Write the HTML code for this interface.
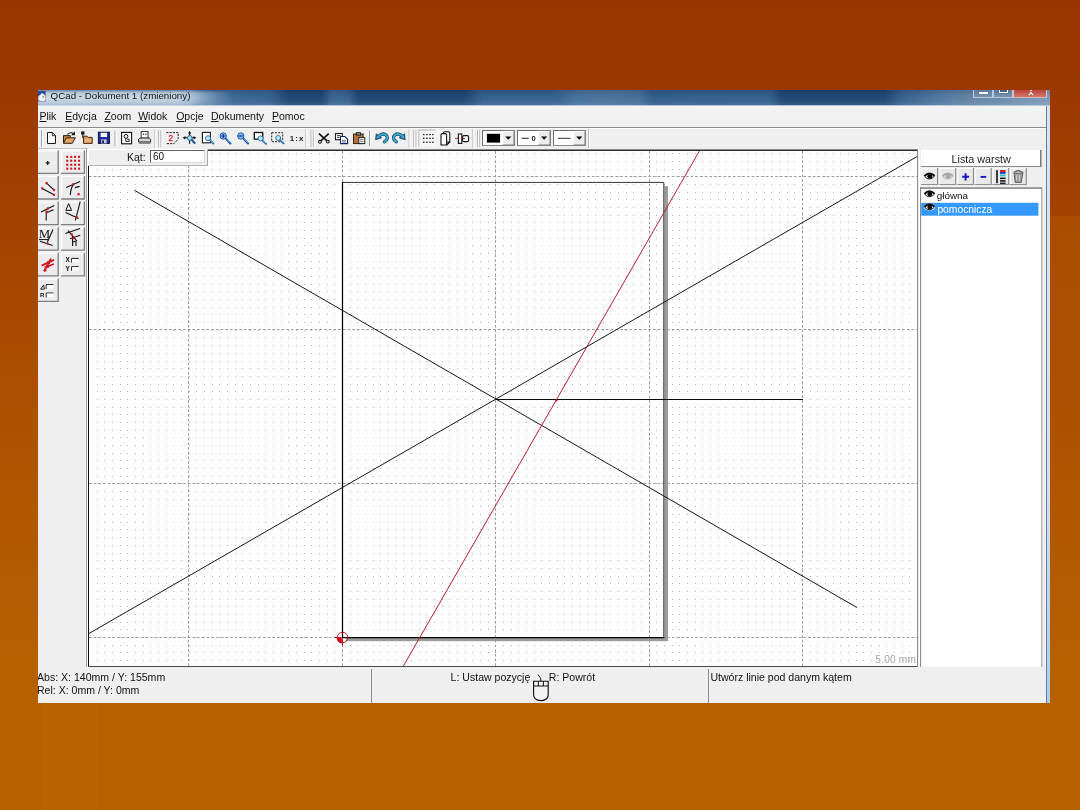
<!DOCTYPE html>
<html lang="pl">
<head>
<meta charset="utf-8">
<title>QCad - Dokument 1 (zmieniony)</title>
<style>
html,body{margin:0;padding:0;}
body{width:1080px;height:810px;overflow:hidden;position:relative;
  font-family:"Liberation Sans",sans-serif;color:#111;
  background:linear-gradient(180deg,#993300 0px,#9b3700 90px,#a24200 216px,#a74900 310px,#ac5000 400px,#b15800 520px,#b66000 660px,#b66000 810px);}
.abs{position:absolute;}
#win{position:absolute;left:38px;top:90px;width:1012px;height:613px;background:#efefef;overflow:hidden;will-change:transform;-webkit-font-smoothing:antialiased;}
/* ---------- title bar ---------- */
#title{position:absolute;left:0;top:0;width:1012px;height:16px;
  background:
   linear-gradient(180deg,rgba(0,0,0,.12) 0,rgba(0,0,0,0) 6px,rgba(255,255,255,.04) 11px,rgba(255,255,255,.10) 14.8px,rgba(176,198,220,.95) 15px,rgba(196,212,230,.95) 16px),
   linear-gradient(90deg,#7a9bbb 0,#6a8fb3 152px,#4a78a3 164px,#3d6a97 180px,#35618e 232px,#1f4773 250px,#1f4773 284px,#3a6591 294px,#38638f 310px,#1f4773 320px,#1f4773 427px,#34608d 444px,#34608d 517px,#44709a 537px,#4a739c 562px,#456e98 602px,#2f5c89 614px,#335f8b 652px,#34608c 732px,#1f4773 744px,#1f4773 847px,#35618d 864px,#4f789f 902px,#6485a6 937px,#7b99b7 1012px);}
#title .glow{position:absolute;left:0;top:0;width:200px;height:16px;
  background:linear-gradient(180deg,rgba(255,255,255,.0) 0,rgba(255,255,255,.55) 3px,rgba(255,255,255,.62) 8px,rgba(255,255,255,.45) 13px,rgba(255,255,255,.2) 16px);
  -webkit-mask-image:linear-gradient(90deg,#000 0,#000 140px,rgba(0,0,0,.55) 165px,rgba(0,0,0,0) 195px);mask-image:linear-gradient(90deg,#000 0,#000 140px,rgba(0,0,0,.55) 165px,rgba(0,0,0,0) 195px);}
#title .txt{position:absolute;left:12.6px;top:-1.2px;font-size:9.75px;line-height:14px;color:#14181e;white-space:nowrap;}
.cap{position:absolute;top:-6px;height:13.5px;border:1px solid rgba(215,226,238,.75);border-top:none;box-sizing:border-box;background:linear-gradient(180deg,#5a7694 0,#64819f 60%,#7893ae 100%);}
.cap.red{background:linear-gradient(180deg,#b8403c 0,#be4a44 55%,#d67a68 100%);}
.cap i{position:absolute;display:block;}
/* ---------- menu ---------- */
#menu{position:absolute;left:0;top:16px;width:1009px;height:21px;background:linear-gradient(180deg,#f5f5f5 0,#f1f1f1 30%,#efefef 100%);border-bottom:1px solid #8a8a8a;}
#menu span{position:absolute;top:3px;font-size:10.5px;line-height:14px;white-space:nowrap;color:#101010;}
#menu u{text-decoration:underline;text-underline-offset:1px;}
/* ---------- toolbar ---------- */
#tb{position:absolute;left:0;top:38px;width:1009px;height:21px;background:#efefef;}
.hd{position:absolute;top:3px;width:1px;height:16px;background:#a5a5a5;box-shadow:1px 0 0 #fff;}
.sep{position:absolute;top:3px;width:1px;height:16px;background:#9c9c9c;box-shadow:1px 0 0 #fff;}
.ic{position:absolute;top:3px;width:15px;height:15px;}
.combo{position:absolute;top:2px;height:15px;background:#fff;border:1px solid #7d7d7d;border-right-color:#d8d8d8;border-bottom-color:#d8d8d8;box-sizing:border-box;}
.combo .ar{position:absolute;right:0;top:0;width:12px;height:13px;background:#ececec;box-shadow:inset 1px 1px 0 #fff,inset -1px -1px 0 #777;}
.combo .ar:after{content:"";position:absolute;left:3px;top:5px;border:3px solid transparent;border-top:3px solid #000;border-bottom:none;}
/* ---------- left tools ---------- */
#tools{position:absolute;left:0;top:59px;width:50px;height:519px;background:#efefef;}
.tbtn{position:absolute;width:23px;height:23px;background:#ececec;box-sizing:border-box;border:1px solid;border-color:#fdfdfd #7c7c7c #7c7c7c #fdfdfd;box-shadow:1px 1px 0 #b8b8b8;}
.tbtn svg{position:absolute;left:0;top:0;}
/* ---------- canvas ---------- */
#cv{position:absolute;left:50px;top:59px;width:830px;height:518px;background:#fff;}
#opt{position:absolute;left:50px;top:59px;width:120px;height:17px;background:#efefef;box-sizing:border-box;border:1px solid;border-color:#fff #a8a8a8 #b4b4b4 #fff;}
#opt .lb{position:absolute;left:38px;top:1px;font-size:10.5px;line-height:13px;}
#opt .in{position:absolute;left:61px;top:0px;width:55px;height:13px;background:#fff;box-sizing:border-box;border:1px solid;border-color:#5e5e5e #d8d8d8 #d8d8d8 #5e5e5e;}
#opt .in span{position:absolute;left:2px;top:0px;font-size:10px;line-height:11px;}
/* ---------- layers ---------- */
#lay{position:absolute;left:881px;top:59px;width:127px;height:519px;background:#efefef;}
#lay .hdr{position:absolute;left:1px;top:1px;width:120px;height:16px;background:#fff;border-right:2px solid #8b8b8b;border-bottom:1px solid #8b8b8b;box-sizing:border-box;text-align:center;font-size:10px;line-height:15px;color:#222;}
.lbtn{position:absolute;top:19px;width:17px;height:17px;background:#e9e9e9;box-sizing:border-box;border:1px solid;border-color:#fbfbfb #8a8a8a #8a8a8a #fbfbfb;}
#lay .list{position:absolute;left:1px;top:38px;width:121px;height:481px;background:#fff;box-sizing:border-box;border:1px solid;border-color:#6f6f6f #bdbdbd #bdbdbd #8a8a8a;}
.row{position:absolute;left:0px;width:118px;height:13px;font-size:9.8px;line-height:13px;white-space:nowrap;}
.row span{position:absolute;left:15px;top:0;}
.row svg{position:absolute;left:2px;top:1px;}
/* ---------- status ---------- */
#st{position:absolute;left:0;top:577px;width:1009px;height:36px;background:#efefef;}
#st .t{position:absolute;font-size:10.55px;line-height:13px;white-space:nowrap;color:#111;}
#st .vs{position:absolute;top:2px;width:1px;height:34px;background:#8d8d8d;}
/* window right border */
#rb{position:absolute;left:1008px;top:16px;width:4px;height:597px;background:linear-gradient(90deg,#717e89 0,#717e89 1px,rgba(0,0,0,0) 1px),linear-gradient(180deg,#d3e3f9 0,#cfe1fa 380px,#b2d3f7 520px,#a8cff7 597px);}
</style>
</head>
<body>
<div id="win">
<div id="title"><div class="glow"></div>
  <svg width="10" height="12" viewBox="0 0 10 12" style="position:absolute;left:0;top:1px"><rect x="0" y="0" width="7.6" height="10.4" fill="#2c4a96"/><path d="M.2 8.6Q0 4.4 2.6 3.8Q3.4 1.2 5.2 3Q7.6 3.6 7.2 6.4Q8.6 8.4 6.6 10H1.6Z" fill="#f1f1f1" stroke="#c4c9d6" stroke-width=".5"/><rect x="4.6" y="5.2" width="1.1" height="1.1" fill="#334"/></svg>
  <div class="txt">QCad - Dokument 1 (zmieniony)</div>
  <div class="cap" style="left:935.3px;width:20px;"><i style="left:5px;top:8px;width:8.6px;height:2.2px;background:#fff;box-shadow:0 0 1px #345"></i></div>
  <div class="cap" style="left:955.3px;width:19.6px;"><i style="left:5px;top:2px;width:8.4px;height:7.4px;box-sizing:border-box;border:1.4px solid #fff;background:#4a627c;box-shadow:0 0 1px #234"></i></div>
  <div class="cap red" style="left:975.2px;width:34px;"><svg width="14" height="7" viewBox="0 0 14 7" style="position:absolute;left:9.5px;top:6px"><path d="M7 1.2L3.6 5.6H5.8L7 3.8L8.2 5.6H10.4Z" fill="#fff" stroke="#7a2a2a" stroke-width=".4"/><path d="M5.2 -1L7 1.6L8.8 -1Z" fill="#fff"/></svg></div>
</div>
<div id="menu">
  <span style="left:1.4px"><u>P</u>lik</span>
  <span style="left:27.2px"><u>E</u>dycja</span>
  <span style="left:66.4px"><u>Z</u>oom</span>
  <span style="left:100.2px"><u>W</u>idok</span>
  <span style="left:138.2px"><u>O</u>pcje</span>
  <span style="left:173px"><u>D</u>okumenty</span>
  <span style="left:234px"><u>P</u>omoc</span>
</div>
<div id="tb">
<svg width="1009" height="21" viewBox="38 128 1009 21" style="position:absolute;left:0;top:0" shape-rendering="auto">
<defs>
  <g id="hdl"><rect x="0" y="130" width="1" height="17" fill="#a8a8a8"/><rect x="1" y="130" width="1" height="17" fill="#fff"/><rect x="2.2" y="130" width="1" height="17" fill="#a8a8a8"/><rect x="3.2" y="130" width="1" height="17" fill="#fff"/></g>
  <g id="tend"><rect x="0" y="129" width="1" height="19" fill="#bdbdbd"/><rect x="1" y="129" width="1" height="19" fill="#fff"/></g>
  <g id="vsep"><rect x="0" y="131" width="1" height="15" fill="#9a9a9a"/><rect x="1" y="131" width="1" height="15" fill="#fff"/></g>
  <g id="mag"><circle cx="0" cy="0" r="2.5" fill="#b4ecf2" stroke="#2a6a9c" stroke-width=".9"/><line x1="2" y1="2" x2="5.4" y2="5.4" stroke="#2a5fae" stroke-width="1.9" stroke-linecap="round"/><line x1="2.3" y1="1.7" x2="5.4" y2="4.8" stroke="#7adcea" stroke-width=".9"/></g>
</defs>
<rect x="38" y="128" width="1009" height="1" fill="#fbfbfb"/><rect x="38" y="148" width="50" height="1" fill="#c2c2c2"/>
<!-- file toolbar -->
<rect x="41" y="130" width="1" height="17" fill="#a8a8a8"/><rect x="42" y="130" width="1" height="17" fill="#fff"/>
<path d="M47.5 132.5H52.3L55.5 135.7V143.5H47.5Z" fill="#fff" stroke="#1c1c1c" stroke-width="1"/><path d="M52.3 132.5V135.7H55.5" fill="none" stroke="#1c1c1c" stroke-width=".9"/>
<g><path d="M63.5 143.3V135.6H70.2V137.6" fill="#c48647" stroke="#2c1e10" stroke-width="1"/><path d="M63.5 143.3L66.3 137.8H75.3L72.3 143.3Z" fill="#e2a565" stroke="#2c1e10" stroke-width="1"/><path d="M67.5 134.3Q70.5 131.6 73.6 133.6" fill="none" stroke="#111" stroke-width="1.1"/><path d="M74.9 131.3V135.3H71.2Z" fill="#111"/></g>
<g><rect x="81.2" y="131.4" width="3.2" height="3.2" fill="#111"/><path d="M82.8 134.5V138" stroke="#111" stroke-width="1.1"/><path d="M83.5 136.2H87.2L88.2 137.4H92.2V143.4H83.5Z" fill="#d8935a" stroke="#4a2c12" stroke-width="1"/><rect x="84.6" y="138.6" width="6.6" height="3.8" fill="#e9b27c"/></g>
<g><rect x="98.4" y="132.2" width="11" height="11.2" fill="#1b2e9c" stroke="#0a1348" stroke-width="1"/><rect x="100.6" y="132.8" width="6.4" height="4.2" fill="#f4f4fa"/><rect x="101.2" y="139.4" width="5.4" height="4" fill="#c9cbdc"/><rect x="102.2" y="140.4" width="1.8" height="2.6" fill="#10184e"/></g>
<use href="#vsep" x="114.6"/>
<g><rect x="121.6" y="132.4" width="10" height="11.4" fill="#fff" stroke="#111" stroke-width="1.1"/><circle cx="126" cy="136.4" r="1.9" fill="none" stroke="#111" stroke-width="1"/><path d="M125.8 138.6V141.4H129.2V139.2H127" fill="none" stroke="#111" stroke-width=".9"/></g>
<g><rect x="141.2" y="131.6" width="6.8" height="6.6" fill="#fff" stroke="#333" stroke-width="1"/><rect x="143" y="133.6" width="1.2" height="1.2" fill="#222"/><rect x="145.4" y="133.6" width="1.2" height="1.2" fill="#222"/><path d="M138.6 142V139.2L140 138H149.2L150.6 139.2V142Z" fill="#d2d2d2" stroke="#2a2a2a" stroke-width="1"/><rect x="138.8" y="142" width="11.8" height="1.8" fill="#777"/></g>
<use href="#tend" x="154.4"/>
<!-- zoom toolbar -->
<use href="#hdl" x="158.3"/>
<g><path d="M166.2 132.6H178.2V139L174.2 143.6H166.2" fill="none" stroke="#222" stroke-width="1" stroke-dasharray="2.2 1.1"/><text x="168.4" y="141" font-family="Liberation Sans, sans-serif" font-size="8.2" fill="#d31b20" stroke="#d31b20" stroke-width=".25">2</text></g>
<g><path d="M183.4 137.8H195.6M189.6 131.6V143.8" stroke="#111" stroke-width="1.1" fill="none"/><path d="M183 137.8l2.4-1.8v3.6zM189.6 131.2l1.8 2.4h-3.6zM196 137.8l-2.4-1.8v3.6z" fill="#111"/><g transform="translate(189.8 138)"><circle r="2.4" fill="#a6e4ee" stroke="#1d5f93" stroke-width="1"/><line x1="1.8" y1="1.8" x2="5.4" y2="5.6" stroke="#1b4f98" stroke-width="2"/></g></g>
<g><rect x="202.4" y="132.4" width="8" height="10.4" fill="#fff" stroke="#1a1a1a" stroke-width="1.1"/><use href="#mag" x="208" y="138.2"/></g>
<g transform="translate(223.2 136)"><circle r="3.2" fill="#86c2f0" stroke="#2456ac" stroke-width="1"/><path d="M-2 0H2M0-2V2" stroke="#0e2a86" stroke-width="1.2"/><line x1="2.6" y1="2.6" x2="7.2" y2="7.4" stroke="#2452aa" stroke-width="2.1" stroke-linecap="round"/><line x1="3" y1="2.4" x2="7" y2="6.6" stroke="#74d6ea" stroke-width=".9"/></g>
<g transform="translate(240.8 136)"><circle r="3.2" fill="#86c2f0" stroke="#2456ac" stroke-width="1"/><path d="M-2 0H2" stroke="#0e2a86" stroke-width="1.2"/><line x1="2.6" y1="2.6" x2="7.2" y2="7.4" stroke="#2452aa" stroke-width="2.1" stroke-linecap="round"/><line x1="3" y1="2.4" x2="7" y2="6.6" stroke="#74d6ea" stroke-width=".9"/></g>
<g><rect x="254.3" y="132.5" width="8.4" height="6.6" fill="#fff" stroke="#111" stroke-width="1.3"/><use href="#mag" x="260.6" y="138.4"/></g>
<g><rect x="271.7" y="132.7" width="11" height="9" fill="none" stroke="#222" stroke-width="1" stroke-dasharray="2 1.2"/><use href="#mag" x="278.2" y="138"/></g>
<text x="289.8" y="140.9" font-family="Liberation Sans, sans-serif" font-size="7.9" font-weight="bold" letter-spacing="1.1" fill="#222">1:x</text>
<use href="#tend" x="305.4"/>
<!-- edit toolbar -->
<use href="#hdl" x="310.6"/>
<g stroke="#141414" fill="none"><path d="M319 133.6L327 140.8M328.8 133.6L320.8 140.8" stroke-width="1.7"/><circle cx="320" cy="141.8" r="1.4" stroke-width="1.1"/><circle cx="327.8" cy="141.6" r="1.4" stroke-width="1.1"/></g>
<g><rect x="335.5" y="133.5" width="6.8" height="6.2" fill="#fff" stroke="#1b1b2b" stroke-width="1.1"/><path d="M337 135.6H340.6M337 137.4H339.4" stroke="#223" stroke-width=".9"/><path d="M340.5 136.5H344.8L347.6 139.3V143.6H340.5Z" fill="#fff" stroke="#14285a" stroke-width="1.1"/><path d="M342 140.4H346M342 142H346" stroke="#3a4a7a" stroke-width=".8"/></g>
<g><rect x="353.5" y="134" width="9.6" height="9.6" fill="#b66f3e" stroke="#33210f" stroke-width="1"/><rect x="356.4" y="132.6" width="4" height="2.6" fill="#8c8c8c" stroke="#222" stroke-width=".9"/><rect x="358.8" y="137.6" width="6" height="6" fill="#fff" stroke="#222" stroke-width="1"/><path d="M360 139.6H363.6M360 141.4H363.6" stroke="#555" stroke-width=".8"/></g>
<use href="#vsep" x="369"/>
<g><path d="M384.4 141.8Q389.4 138.2 386 135Q382.4 132.6 378.6 136.2" fill="none" stroke="#1c4f7f" stroke-width="3.3" stroke-linecap="round"/><path d="M375.6 139.8L376.2 133.8L381.6 137.8Z" fill="#1c4f7f" stroke="#1c4f7f" stroke-width=".8" stroke-linejoin="round"/><path d="M384.4 141.8Q389.4 138.2 386 135Q382.4 132.6 378.6 136.2" fill="none" stroke="#36b2c4" stroke-width="1.7" stroke-linecap="round"/><path d="M376.5 138.6L376.9 135.2L380 137.5Z" fill="#36b2c4"/></g>
<g><path d="M396.4 141.8Q391.4 138.2 394.8 135Q398.4 132.6 402.2 136.2" fill="none" stroke="#1c4f7f" stroke-width="3.3" stroke-linecap="round"/><path d="M405.2 139.8L404.6 133.8L399.2 137.8Z" fill="#1c4f7f" stroke="#1c4f7f" stroke-width=".8" stroke-linejoin="round"/><path d="M396.4 141.8Q391.4 138.2 394.8 135Q398.4 132.6 402.2 136.2" fill="none" stroke="#36b2c4" stroke-width="1.7" stroke-linecap="round"/><path d="M404.3 138.6L403.9 135.2L400.8 137.5Z" fill="#36b2c4"/></g>
<use href="#tend" x="408.6"/>
<!-- view toolbar -->
<use href="#hdl" x="413.4"/>
<rect x="418.8" y="130" width="16.8" height="16.6" fill="#f7f7f7"/><path d="M418.8 146.6V130H435.6" fill="none" stroke="#b4b4b4" stroke-width="1"/>
<g fill="#111"><rect x="423.1" y="133.9" width="1.4" height="1.3"/><rect x="426.2" y="133.9" width="1.4" height="1.3"/><rect x="429.3" y="133.9" width="1.4" height="1.3"/><rect x="432.2" y="133.9" width="1.4" height="1.3"/><rect x="423.1" y="137.7" width="1.4" height="1.3"/><rect x="426.2" y="137.7" width="1.4" height="1.3"/><rect x="429.3" y="137.7" width="1.4" height="1.3"/><rect x="432.2" y="137.7" width="1.4" height="1.3"/><rect x="423.1" y="141.6" width="1.4" height="1.3"/><rect x="426.2" y="141.6" width="1.4" height="1.3"/><rect x="429.3" y="141.6" width="1.4" height="1.3"/><rect x="432.2" y="141.6" width="1.4" height="1.3"/></g>
<rect x="436.4" y="130" width="16.4" height="16.6" fill="#f4f4f4"/>
<g fill="#fff" stroke="#111" stroke-width="1.1"><path d="M443.4 133.2Q443.4 131.8 444.8 131.8H448.4Q449.8 131.8 449.8 133.2V142H443.4Z"/><path d="M441 135Q441 133.6 442.4 133.6H445.2Q446.6 133.6 446.6 135V145H441Z"/><path d="M446.6 145L449.8 142" fill="none"/></g>
<g><path d="M455 138.4H459" stroke="#d0242c" stroke-width="1"/><rect x="458.4" y="134" width="3.4" height="9.4" fill="#fff" stroke="#111" stroke-width="1.1"/><rect x="462.6" y="135.6" width="6" height="6" rx="1.4" fill="#fff" stroke="#111" stroke-width="1.1"/><rect x="462.8" y="137.8" width="2" height="1.4" fill="#d0242c"/></g>
<use href="#tend" x="472.4"/>
<!-- pen toolbar -->
<use href="#hdl" x="477.2"/>
<g><rect x="482.5" y="130.5" width="32" height="15" fill="#fff" stroke="#8a8a8a" stroke-width="1"/><path d="M482.5 145.5V130.5H514.5" fill="none" stroke="#6e6e6e"/><rect x="486.9" y="133.8" width="13.2" height="8.8" fill="#000"/><rect x="502.6" y="131.4" width="11.4" height="13.6" fill="#ececec"/><path d="M502.6 145V131.4H514" fill="none" stroke="#fff"/><path d="M502.6 145H514V131.4" fill="none" stroke="#7a7a7a"/><path d="M505.2 136.6H511.4L508.3 139.8Z" fill="#000"/></g>
<g><rect x="517.5" y="130.5" width="33" height="15" fill="#fff" stroke="#8a8a8a" stroke-width="1"/><path d="M517.5 145.5V130.5H550.5" fill="none" stroke="#6e6e6e"/><path d="M521.8 138.3H528.8" stroke="#222" stroke-width="1"/><text x="531.6" y="141.4" font-family="Liberation Sans, sans-serif" font-size="7.6" font-weight="bold" fill="#111">0</text><rect x="538.4" y="131.4" width="11.6" height="13.6" fill="#ececec"/><path d="M538.4 145V131.4H550" fill="none" stroke="#fff"/><path d="M538.4 145H550V131.4" fill="none" stroke="#7a7a7a"/><path d="M541 136.6H547.2L544.1 139.8Z" fill="#000"/></g>
<g><rect x="553.5" y="130.5" width="32" height="15" fill="#fff" stroke="#8a8a8a" stroke-width="1"/><path d="M553.5 145.5V130.5H585.5" fill="none" stroke="#6e6e6e"/><path d="M558 138.3H570.6" stroke="#333" stroke-width="1"/><rect x="573.6" y="131.4" width="11.4" height="13.6" fill="#ececec"/><path d="M573.6 145V131.4H585" fill="none" stroke="#fff"/><path d="M573.6 145H585V131.4" fill="none" stroke="#7a7a7a"/><path d="M576.2 136.6H582.4L579.3 139.8Z" fill="#000"/></g>
<use href="#tend" x="588"/>
</svg>
</div>
<div id="tools">
<svg width="50" height="519" viewBox="38 149 50 519" style="position:absolute;left:0;top:0">
<rect x="38" y="149" width="50" height="519" fill="#efefef"/><rect x="38" y="149" width="50" height="1" fill="#f8f8f8"/>
<rect x="86" y="149" width="1" height="518" fill="#a2a2a2"/><rect x="87" y="149" width="1" height="518" fill="#fafafa"/>
<rect x="38" y="667" width="50" height="1" fill="#fbfbfb"/>
<rect x="34.4" y="150.4" width="24.2" height="23.4" fill="#ececec"/><path d="M34.9 173.8V150.9H58.6" fill="none" stroke="#fdfdfd" stroke-width="1.2"/><path d="M34.4 173.4H58.2V150.4" fill="none" stroke="#7e7e7e" stroke-width="1.3"/>
<rect x="61.0" y="150.4" width="23.8" height="23.4" fill="#ececec"/><path d="M61.5 173.8V150.9H84.8" fill="none" stroke="#fdfdfd" stroke-width="1.2"/><path d="M61.0 173.4H84.4V150.4" fill="none" stroke="#7e7e7e" stroke-width="1.3"/>
<rect x="34.4" y="176.0" width="24.2" height="23.4" fill="#ececec"/><path d="M34.9 199.4V176.5H58.6" fill="none" stroke="#fdfdfd" stroke-width="1.2"/><path d="M34.4 199.0H58.2V176.0" fill="none" stroke="#7e7e7e" stroke-width="1.3"/>
<rect x="61.0" y="176.0" width="23.8" height="23.4" fill="#ececec"/><path d="M61.5 199.4V176.5H84.8" fill="none" stroke="#fdfdfd" stroke-width="1.2"/><path d="M61.0 199.0H84.4V176.0" fill="none" stroke="#7e7e7e" stroke-width="1.3"/>
<rect x="34.4" y="201.6" width="24.2" height="23.4" fill="#ececec"/><path d="M34.9 225.0V202.1H58.6" fill="none" stroke="#fdfdfd" stroke-width="1.2"/><path d="M34.4 224.6H58.2V201.6" fill="none" stroke="#7e7e7e" stroke-width="1.3"/>
<rect x="61.0" y="201.6" width="23.8" height="23.4" fill="#ececec"/><path d="M61.5 225.0V202.1H84.8" fill="none" stroke="#fdfdfd" stroke-width="1.2"/><path d="M61.0 224.6H84.4V201.6" fill="none" stroke="#7e7e7e" stroke-width="1.3"/>
<rect x="34.4" y="227.2" width="24.2" height="23.4" fill="#ececec"/><path d="M34.9 250.6V227.7H58.6" fill="none" stroke="#fdfdfd" stroke-width="1.2"/><path d="M34.4 250.2H58.2V227.2" fill="none" stroke="#7e7e7e" stroke-width="1.3"/>
<rect x="61.0" y="227.2" width="23.8" height="23.4" fill="#ececec"/><path d="M61.5 250.6V227.7H84.8" fill="none" stroke="#fdfdfd" stroke-width="1.2"/><path d="M61.0 250.2H84.4V227.2" fill="none" stroke="#7e7e7e" stroke-width="1.3"/>
<rect x="34.4" y="252.8" width="24.2" height="23.4" fill="#ececec"/><path d="M34.9 276.2V253.3H58.6" fill="none" stroke="#fdfdfd" stroke-width="1.2"/><path d="M34.4 275.8H58.2V252.8" fill="none" stroke="#7e7e7e" stroke-width="1.3"/>
<rect x="61.0" y="252.8" width="23.8" height="23.4" fill="#ececec"/><path d="M61.5 276.2V253.3H84.8" fill="none" stroke="#fdfdfd" stroke-width="1.2"/><path d="M61.0 275.8H84.4V252.8" fill="none" stroke="#7e7e7e" stroke-width="1.3"/>
<rect x="34.4" y="278.4" width="24.2" height="23.4" fill="#ececec"/><path d="M34.9 301.8V278.9H58.6" fill="none" stroke="#fdfdfd" stroke-width="1.2"/><path d="M34.4 301.4H58.2V278.4" fill="none" stroke="#7e7e7e" stroke-width="1.3"/>
<line x1="45.7" y1="162.9" x2="49.7" y2="162.9" stroke="#111" stroke-width="1.2"/><line x1="47.7" y1="160.9" x2="47.7" y2="164.9" stroke="#111" stroke-width="1.2"/>
<rect x="66.2" y="155.8" width="2.1" height="2.1" fill="#cc1820"/>
<rect x="70.2" y="155.8" width="2.1" height="2.1" fill="#cc1820"/>
<rect x="74.0" y="155.8" width="2.1" height="2.1" fill="#cc1820"/>
<rect x="78.0" y="155.8" width="2.1" height="2.1" fill="#cc1820"/>
<rect x="66.2" y="159.7" width="2.1" height="2.1" fill="#cc1820"/>
<rect x="70.2" y="159.7" width="2.1" height="2.1" fill="#cc1820"/>
<rect x="74.0" y="159.7" width="2.1" height="2.1" fill="#cc1820"/>
<rect x="78.0" y="159.7" width="2.1" height="2.1" fill="#cc1820"/>
<rect x="66.2" y="163.7" width="2.1" height="2.1" fill="#cc1820"/>
<rect x="70.2" y="163.7" width="2.1" height="2.1" fill="#cc1820"/>
<rect x="74.0" y="163.7" width="2.1" height="2.1" fill="#cc1820"/>
<rect x="78.0" y="163.7" width="2.1" height="2.1" fill="#cc1820"/>
<rect x="66.2" y="167.6" width="2.1" height="2.1" fill="#cc1820"/>
<rect x="70.2" y="167.6" width="2.1" height="2.1" fill="#cc1820"/>
<rect x="74.0" y="167.6" width="2.1" height="2.1" fill="#cc1820"/>
<rect x="78.0" y="167.6" width="2.1" height="2.1" fill="#cc1820"/>
<line x1="46.6" y1="183.2" x2="54.0" y2="190.0" stroke="#111" stroke-width="1.1"/><line x1="42.2" y1="188.4" x2="54.0" y2="194.8" stroke="#111" stroke-width="1.1"/>
<rect x="45.5" y="182.1" width="2.2" height="2.2" fill="#cc1820"/><rect x="52.9" y="188.9" width="2.2" height="2.2" fill="#cc1820"/><rect x="41.1" y="187.3" width="2.2" height="2.2" fill="#cc1820"/><rect x="52.9" y="193.7" width="2.2" height="2.2" fill="#cc1820"/>
<line x1="66.2" y1="187.6" x2="80.0" y2="181.4" stroke="#111" stroke-width="1.1"/><path d="M73.2 184.6Q70.6 188.4 70.4 195" fill="none" stroke="#111" stroke-width="1.1"/><line x1="75.0" y1="187.6" x2="79.6" y2="186.4" stroke="#111" stroke-width="1.1"/>
<rect x="72.1" y="183.3" width="2.2" height="2.2" fill="#cc1820"/><rect x="77.5" y="193.1" width="2.2" height="2.2" fill="#cc1820"/>
<line x1="41.0" y1="212.0" x2="54.2" y2="205.4" stroke="#111" stroke-width="1.1"/><line x1="46.2" y1="210.4" x2="46.2" y2="220.6" stroke="#111" stroke-width="1.1"/><line x1="47.0" y1="212.4" x2="53.6" y2="209.8" stroke="#111" stroke-width="1.1"/>
<rect x="46.7" y="207.3" width="2.2" height="2.2" fill="#cc1820"/><rect x="45.9" y="210.9" width="2.2" height="2.2" fill="#cc1820"/>
<path d="M68.6 203.6L65.8 210.4H71.6Z" fill="none" stroke="#111" stroke-width="1"/><line x1="65.6" y1="212.6" x2="78.6" y2="218.4" stroke="#111" stroke-width="1.1"/><line x1="80.2" y1="201.6" x2="75.4" y2="220.4" stroke="#111" stroke-width="1.1"/>
<rect x="75.2" y="216.0" width="2.4" height="2.4" fill="#cc1820"/>
<text x="39" y="238" font-family="Liberation Serif, serif" font-size="12.5" fill="#111">M</text>
<line x1="39.0" y1="239.6" x2="49.0" y2="239.6" stroke="#111" stroke-width="1.0"/><line x1="53.0" y1="229.6" x2="47.2" y2="242.4" stroke="#111" stroke-width="1.1"/><line x1="40.0" y1="241.2" x2="52.6" y2="245.4" stroke="#111" stroke-width="1.1"/><rect x="46.6" y="242.6" width="2.0" height="2.0" fill="#cc1820"/>
<line x1="65.4" y1="233.6" x2="80.0" y2="228.4" stroke="#111" stroke-width="1.1"/><line x1="68.0" y1="230.6" x2="77.0" y2="241.0" stroke="#111" stroke-width="1.1"/><line x1="70.0" y1="238.8" x2="80.2" y2="235.2" stroke="#111" stroke-width="1.1"/><line x1="72.6" y1="236.0" x2="72.6" y2="246.0" stroke="#111" stroke-width="1.1"/><line x1="76.0" y1="241.0" x2="76.0" y2="246.0" stroke="#111" stroke-width="1.1"/><line x1="72.6" y1="242.0" x2="76.0" y2="241.0" stroke="#111" stroke-width="1.1"/>
<rect x="70.5" y="233.3" width="2.2" height="2.2" fill="#cc1820"/><rect x="72.5" y="237.1" width="2.2" height="2.2" fill="#cc1820"/>
<line x1="41.6" y1="265.6" x2="54.0" y2="259.8" stroke="#cc1820" stroke-width="1.9"/><line x1="51.0" y1="258.6" x2="44.0" y2="271.4" stroke="#cc1820" stroke-width="1.9"/><line x1="44.6" y1="267.6" x2="53.8" y2="264.0" stroke="#cc1820" stroke-width="1.7"/>
<rect x="47.2" y="261.2" width="2.8" height="2.8" fill="#cc1820"/><rect x="46.2" y="265.0" width="2.8" height="2.8" fill="#cc1820"/><rect x="44.0" y="269.0" width="2.4" height="2.4" fill="#cc1820"/>
<text x="65.6" y="262.4" font-family="Liberation Sans, sans-serif" font-size="6.4" font-weight="bold" fill="#111">X</text>
<text x="65.6" y="270.8" font-family="Liberation Sans, sans-serif" font-size="6.4" font-weight="bold" fill="#111">Y</text>
<path d="M71.6 262.6V258.4H78.8" fill="none" stroke="#222" stroke-width="1"/><path d="M71.6 270.8V266.6H78.8" fill="none" stroke="#222" stroke-width="1"/>
<rect x="72.2" y="259" width="6.6" height="3.4" fill="#fff"/><rect x="72.2" y="267.2" width="6.6" height="3.4" fill="#fff"/>
<path d="M43.6 285L40.6 289.2H44.4Z" fill="none" stroke="#111" stroke-width=".9"/>
<text x="40" y="297.4" font-family="Liberation Sans, sans-serif" font-size="6" font-weight="bold" fill="#111">R</text>
<path d="M46.2 289V284.6H53.4" fill="none" stroke="#222" stroke-width="1"/><path d="M46.2 297.4V293H53.4" fill="none" stroke="#222" stroke-width="1"/>
<rect x="46.8" y="285.2" width="6.6" height="3.4" fill="#fff"/><rect x="46.8" y="293.6" width="6.6" height="3.4" fill="#fff"/>
</svg>
</div>
<div id="cv">
<svg width="830" height="518" viewBox="0 0 830 518" style="position:absolute;left:0;top:0">
<rect x="0" y="0" width="830" height="518" fill="#fff"/>
<defs><g id="dr"><rect x="9" y="0" width="1" height="1"/><rect x="16" y="0" width="1" height="1"/><rect x="24" y="0" width="1" height="1"/><rect x="32" y="0" width="1" height="1"/><rect x="39" y="0" width="1" height="1"/><rect x="47" y="0" width="1" height="1"/><rect x="55" y="0" width="1" height="1"/><rect x="62" y="0" width="1" height="1"/><rect x="70" y="0" width="1" height="1"/><rect x="78" y="0" width="1" height="1"/><rect x="85" y="0" width="1" height="1"/><rect x="93" y="0" width="1" height="1"/><rect x="101" y="0" width="1" height="1"/><rect x="108" y="0" width="1" height="1"/><rect x="116" y="0" width="1" height="1"/><rect x="124" y="0" width="1" height="1"/><rect x="131" y="0" width="1" height="1"/><rect x="139" y="0" width="1" height="1"/><rect x="147" y="0" width="1" height="1"/><rect x="154" y="0" width="1" height="1"/><rect x="162" y="0" width="1" height="1"/><rect x="170" y="0" width="1" height="1"/><rect x="177" y="0" width="1" height="1"/><rect x="185" y="0" width="1" height="1"/><rect x="193" y="0" width="1" height="1"/><rect x="200" y="0" width="1" height="1"/><rect x="208" y="0" width="1" height="1"/><rect x="216" y="0" width="1" height="1"/><rect x="223" y="0" width="1" height="1"/><rect x="231" y="0" width="1" height="1"/><rect x="239" y="0" width="1" height="1"/><rect x="246" y="0" width="1" height="1"/><rect x="254" y="0" width="1" height="1"/><rect x="262" y="0" width="1" height="1"/><rect x="269" y="0" width="1" height="1"/><rect x="277" y="0" width="1" height="1"/><rect x="285" y="0" width="1" height="1"/><rect x="292" y="0" width="1" height="1"/><rect x="300" y="0" width="1" height="1"/><rect x="308" y="0" width="1" height="1"/><rect x="315" y="0" width="1" height="1"/><rect x="323" y="0" width="1" height="1"/><rect x="331" y="0" width="1" height="1"/><rect x="338" y="0" width="1" height="1"/><rect x="346" y="0" width="1" height="1"/><rect x="354" y="0" width="1" height="1"/><rect x="361" y="0" width="1" height="1"/><rect x="369" y="0" width="1" height="1"/><rect x="377" y="0" width="1" height="1"/><rect x="384" y="0" width="1" height="1"/><rect x="392" y="0" width="1" height="1"/><rect x="400" y="0" width="1" height="1"/><rect x="407" y="0" width="1" height="1"/><rect x="415" y="0" width="1" height="1"/><rect x="423" y="0" width="1" height="1"/><rect x="430" y="0" width="1" height="1"/><rect x="438" y="0" width="1" height="1"/><rect x="446" y="0" width="1" height="1"/><rect x="453" y="0" width="1" height="1"/><rect x="461" y="0" width="1" height="1"/><rect x="469" y="0" width="1" height="1"/><rect x="476" y="0" width="1" height="1"/><rect x="484" y="0" width="1" height="1"/><rect x="492" y="0" width="1" height="1"/><rect x="499" y="0" width="1" height="1"/><rect x="507" y="0" width="1" height="1"/><rect x="515" y="0" width="1" height="1"/><rect x="522" y="0" width="1" height="1"/><rect x="530" y="0" width="1" height="1"/><rect x="538" y="0" width="1" height="1"/><rect x="545" y="0" width="1" height="1"/><rect x="553" y="0" width="1" height="1"/><rect x="561" y="0" width="1" height="1"/><rect x="568" y="0" width="1" height="1"/><rect x="576" y="0" width="1" height="1"/><rect x="584" y="0" width="1" height="1"/><rect x="591" y="0" width="1" height="1"/><rect x="599" y="0" width="1" height="1"/><rect x="607" y="0" width="1" height="1"/><rect x="614" y="0" width="1" height="1"/><rect x="622" y="0" width="1" height="1"/><rect x="630" y="0" width="1" height="1"/><rect x="637" y="0" width="1" height="1"/><rect x="645" y="0" width="1" height="1"/><rect x="653" y="0" width="1" height="1"/><rect x="660" y="0" width="1" height="1"/><rect x="668" y="0" width="1" height="1"/><rect x="676" y="0" width="1" height="1"/><rect x="683" y="0" width="1" height="1"/><rect x="691" y="0" width="1" height="1"/><rect x="699" y="0" width="1" height="1"/><rect x="706" y="0" width="1" height="1"/><rect x="714" y="0" width="1" height="1"/><rect x="722" y="0" width="1" height="1"/><rect x="729" y="0" width="1" height="1"/><rect x="737" y="0" width="1" height="1"/><rect x="745" y="0" width="1" height="1"/><rect x="752" y="0" width="1" height="1"/><rect x="760" y="0" width="1" height="1"/><rect x="768" y="0" width="1" height="1"/><rect x="775" y="0" width="1" height="1"/><rect x="783" y="0" width="1" height="1"/><rect x="791" y="0" width="1" height="1"/><rect x="798" y="0" width="1" height="1"/><rect x="806" y="0" width="1" height="1"/><rect x="814" y="0" width="1" height="1"/><rect x="821" y="0" width="1" height="1"/></g></defs>
<g fill="#b2b2b2">
<use href="#dr" y="511"/>
<use href="#dr" y="503"/>
<use href="#dr" y="496"/>
<use href="#dr" y="488"/>
<use href="#dr" y="480"/>
<use href="#dr" y="473"/>
<use href="#dr" y="465"/>
<use href="#dr" y="457"/>
<use href="#dr" y="450"/>
<use href="#dr" y="442"/>
<use href="#dr" y="434"/>
<use href="#dr" y="427"/>
<use href="#dr" y="419"/>
<use href="#dr" y="411"/>
<use href="#dr" y="404"/>
<use href="#dr" y="396"/>
<use href="#dr" y="388"/>
<use href="#dr" y="380"/>
<use href="#dr" y="373"/>
<use href="#dr" y="365"/>
<use href="#dr" y="357"/>
<use href="#dr" y="350"/>
<use href="#dr" y="342"/>
<use href="#dr" y="334"/>
<use href="#dr" y="327"/>
<use href="#dr" y="319"/>
<use href="#dr" y="311"/>
<use href="#dr" y="304"/>
<use href="#dr" y="296"/>
<use href="#dr" y="288"/>
<use href="#dr" y="281"/>
<use href="#dr" y="273"/>
<use href="#dr" y="265"/>
<use href="#dr" y="258"/>
<use href="#dr" y="250"/>
<use href="#dr" y="242"/>
<use href="#dr" y="235"/>
<use href="#dr" y="227"/>
<use href="#dr" y="219"/>
<use href="#dr" y="212"/>
<use href="#dr" y="204"/>
<use href="#dr" y="196"/>
<use href="#dr" y="188"/>
<use href="#dr" y="181"/>
<use href="#dr" y="173"/>
<use href="#dr" y="165"/>
<use href="#dr" y="158"/>
<use href="#dr" y="150"/>
<use href="#dr" y="142"/>
<use href="#dr" y="135"/>
<use href="#dr" y="127"/>
<use href="#dr" y="119"/>
<use href="#dr" y="112"/>
<use href="#dr" y="104"/>
<use href="#dr" y="96"/>
<use href="#dr" y="89"/>
<use href="#dr" y="81"/>
<use href="#dr" y="73"/>
<use href="#dr" y="66"/>
<use href="#dr" y="58"/>
<use href="#dr" y="50"/>
<use href="#dr" y="43"/>
<use href="#dr" y="35"/>
<use href="#dr" y="27"/>
<use href="#dr" y="20"/>
<use href="#dr" y="12"/>
<use href="#dr" y="4"/>
</g>
<g stroke="#9a9a9a" stroke-width="1" stroke-dasharray="2.6 2.1" fill="none">
<line x1="100.5" y1="2" x2="100.5" y2="517"/>
<line x1="254.5" y1="2" x2="254.5" y2="517"/>
<line x1="407.5" y1="2" x2="407.5" y2="517"/>
<line x1="561.5" y1="2" x2="561.5" y2="517"/>
<line x1="714.5" y1="2" x2="714.5" y2="517"/>
<line x1="1" y1="27.5" x2="829" y2="27.5"/>
<line x1="1" y1="180.5" x2="829" y2="180.5"/>
<line x1="1" y1="334.5" x2="829" y2="334.5"/>
<line x1="1" y1="488.5" x2="829" y2="488.5"/>
</g>
<rect x="576.30" y="37.10" width="3.7" height="454.60" fill="#9b9b9b"/>
<rect x="258.20" y="489.00" width="321.80" height="3.2" fill="#9b9b9b"/>
<path d="M254.50 33.40 H575.80 V488.50" fill="none" stroke="#333" stroke-width="1"/>
<path d="M254.50 32.90 V488.50 H576.30" fill="none" stroke="#000" stroke-width="1.25"/>
<g stroke="#0a0a0a" stroke-width="0.95" fill="none">
<line x1="46.40" y1="41.25" x2="768.90" y2="458.50"/>
<line x1="0.50" y1="484.75" x2="829.50" y2="7.25"/>
<line x1="407.50" y1="250.50" x2="715.00" y2="250.50" stroke-width="1.2"/>
</g>
<line x1="611.90" y1="1.00" x2="315.40" y2="517.00" stroke="#b5202a" stroke-width="1"/>
<rect x="467.50" y="250.30" width="2" height="2" fill="#c01020"/>
<g stroke="#c4141c" stroke-width="1" fill="none">
<circle cx="254.50" cy="488.50" r="5.3"/>
<path d="M253.90 489.10 h-5.3 a5.3 5.3 0 0 0 5.3 5.3 z" fill="#d01018" stroke="none"/>
<line x1="246.50" y1="488.50" x2="253.50" y2="488.50"/>
<line x1="254.50" y1="489.50" x2="254.50" y2="496.50"/>
</g>
<text x="828" y="514.2" text-anchor="end" font-family="Liberation Sans, sans-serif" font-size="10.1" letter-spacing="0.2" fill="#a6a6a6">5.00 mm</text>
<rect x="0" y="0" width="830" height="1" fill="#8a8a8a"/>
<rect x="0" y="1" width="830" height="1" fill="#2e2e2e"/>
<rect x="0" y="0" width="1" height="518" fill="#101010"/>
<rect x="0" y="517" width="830" height="1" fill="#4a4a4a"/>
<rect x="829" y="0" width="1" height="518" fill="#8a8a8a"/>
</svg>
</div>
<div id="opt"><span class="lb">Kąt:</span><div class="in"><span>60</span></div></div>
<div id="lay">
<svg width="128" height="519" viewBox="919 149 128 519" style="position:absolute;left:0;top:0">
<defs>
  <g id="eye"><path d="M0.2 3.6Q5 -1.6 10.4 3.2" fill="none" stroke-width="1.9"/><path d="M0.6 4Q5.2 9 10.4 3.6" fill="none" stroke-width=".9"/><ellipse cx="5.6" cy="3.7" rx="2.5" ry="2.4" stroke="none"/></g>
  <g id="lb"><rect x="0" y="168" width="16.8" height="16.8" fill="#e9e9e9"/><path d="M.5 184.8V168.5H16.8" fill="none" stroke="#fcfcfc" stroke-width="1"/><path d="M0 184.5H16.4V168" fill="none" stroke="#8e8e8e" stroke-width="1.2"/></g>
</defs>
<rect x="919" y="149" width="128" height="519" fill="#efefef"/>
<rect x="919" y="149" width="1" height="518" fill="#fdfdfd"/>
<!-- header -->
<rect x="921" y="150" width="120" height="16" fill="#fff"/>
<rect x="1040" y="150" width="1.6" height="16.8" fill="#7f7f7f"/><rect x="921" y="166" width="120.6" height="1" fill="#8b8b8b"/>
<text x="981.2" y="162.5" text-anchor="middle" font-family="Liberation Sans, sans-serif" font-size="10.75" fill="#1c1c1c">Lista warstw</text>
<!-- buttons -->
<use href="#lb" x="921.2"/><use href="#lb" x="939.3"/><use href="#lb" x="957.1"/><use href="#lb" x="974.8"/><use href="#lb" x="992.3"/><use href="#lb" x="1009.9"/>
<use href="#eye" x="924.2" y="172.6" fill="#0a0a0a" stroke="#0a0a0a"/>
<g opacity=".95"><use href="#eye" x="942.4" y="172.6" fill="#a4a4a4" stroke="#a4a4a4"/></g>
<path d="M962.2 176.8H969M965.6 173.2V180.4" stroke="#1616c4" stroke-width="1.9" fill="none"/>
<path d="M980.6 176.9H986.2" stroke="#1616c4" stroke-width="1.9" fill="none"/>
<g><rect x="996.2" y="170.2" width="1.6" height="13" fill="#111"/><rect x="1000" y="170" width="5.6" height="2" fill="#d8202c"/><rect x="1000" y="172" width="5.6" height="1.8" fill="#2036b8"/><rect x="1000" y="174.4" width="5.6" height="2" fill="#2fc2c8"/><rect x="1000" y="177.6" width="5.6" height="1.5" fill="#111"/><rect x="1000" y="180.2" width="5.6" height="1.5" fill="#111"/><rect x="1000" y="182.6" width="5.6" height="1.3" fill="#111"/></g>
<g><path d="M1014 173.2L1015.2 182.4H1021.2L1022.8 173.2Z" fill="#9e9e9e" stroke="#5e5e5e" stroke-width="1"/><path d="M1013.4 172.4L1018.4 170.6L1023.4 172.6" fill="none" stroke="#6a6a6a" stroke-width="1.5"/><path d="M1016.6 175V180.6M1019.4 175V180.6" stroke="#d6d6d6" stroke-width=".9"/></g>
<!-- list -->
<rect x="920" y="187.4" width="121.4" height="480" fill="#fff"/>
<rect x="920" y="187.4" width="122.2" height="1.3" fill="#6c6c6c"/><rect x="920" y="187.4" width="1.1" height="480" fill="#8a8a8a"/>
<rect x="1041.3" y="188" width="1" height="479.4" fill="#9c9c9c"/><rect x="920" y="666.8" width="122" height="1" fill="#d6d6d6"/>
<rect x="921.2" y="202.8" width="117.2" height="12.9" fill="#3399ff"/>
<use href="#eye" x="924.2" y="190.4" fill="#0a0a0a" stroke="#0a0a0a"/>
<g><ellipse cx="929.6" cy="207" rx="5.6" ry="3.6" fill="#eef4fb"/><use href="#eye" x="924.2" y="203.4" fill="#0a0a0a" stroke="#0a0a0a"/></g>
<text x="936.8" y="198.8" font-family="Liberation Sans, sans-serif" font-size="9.9" fill="#111">główna</text>
<text x="937.4" y="212.6" font-family="Liberation Sans, sans-serif" font-size="10.3" fill="#fff">pomocnicza</text>
</svg>
</div>
<div id="st">
  <div class="t" style="left:-1px;top:3.5px;">Abs: X: 140mm / Y: 155mm</div>
  <div class="t" style="left:-1px;top:16.9px;">Rel: X: 0mm / Y: 0mm</div>
  <div class="vs" style="left:333px"></div>
  <div class="t" style="left:412.6px;top:3.5px;">L: Ustaw pozycję</div>
  <svg width="22" height="30" viewBox="530 672 22 30" style="position:absolute;left:492px;top:5px">
    <path d="M540.8 681.4Q541.2 678.4 540 677.2Q538.6 676 538.2 674.6" fill="none" stroke="#111" stroke-width="1"/>
    <path d="M533.6 681.2H548.2V694.6Q548.2 700.6 540.9 700.6Q533.6 700.6 533.6 694.6Z" fill="#f4f4f4" stroke="#111" stroke-width="1.15"/>
    <path d="M533.6 686H548.2M538.4 681.2V686M543.4 681.2V686" fill="none" stroke="#111" stroke-width="1"/>
  </svg>
  <div class="t" style="left:510.8px;top:3.5px;">R: Powrót</div>
  <div class="vs" style="left:670.4px"></div>
  <div class="t" style="left:672.4px;top:4.1px;">Utwórz linie pod danym kątem</div>
</div>
<div id="rb"></div>
</div>
<div class="abs" style="left:1050px;top:215.5px;width:30px;height:190px;background:linear-gradient(180deg,rgba(255,190,0,.085) 0,rgba(255,190,0,.05) 50%,rgba(255,190,0,0) 100%);"></div>
<div class="abs" style="left:42px;top:703px;width:56px;height:107px;background:rgba(255,200,40,.035);"></div>
</body>
</html>
